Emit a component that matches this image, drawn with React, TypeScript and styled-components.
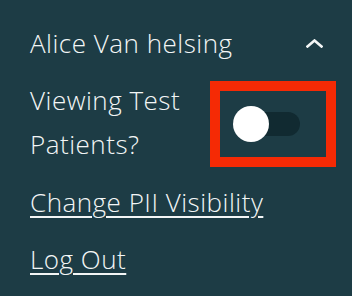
import styled, { createGlobalStyle } from 'styled-components'

const GlobalStyle = createGlobalStyle`
	html, body {
		margin: 0;
		padding: 0;
		background: #1d3c45;
	}
	body {
		font-family: "Open Sans", Lato, sans-serif;
	}
`

const Panel = styled.nav`
	width: 352px;
	height: 296px;
	box-sizing: border-box;
	padding: 21px 16px 0 30px;
	background: #1d3c45;
	color: #f3f6f6;
	display: flex;
	flex-direction: column;
	gap: 13px;
	font-size: 26px;
	font-weight: 300;
	letter-spacing: 0.5px;
	line-height: 44px;
`

const Header = styled.div`
	display: flex;
	align-items: center;
	justify-content: space-between;
	padding-right: 13px;
`

const Name = styled.span``

const Chevron = styled.svg`
	width: 17px;
	height: 9px;
	display: block;
`

const ToggleRow = styled.div`
	display: flex;
	align-items: flex-start;
	justify-content: space-between;
`

const Label = styled.span`
	width: 178px;
`

const Highlight = styled.div`
	margin-top: 3px;
	width: 126px;
	height: 86px;
	box-sizing: border-box;
	border: 10px solid #f52a05;
	display: flex;
	align-items: center;
	padding-left: 13px;
`

const Track = styled.button`
	position: relative;
	width: 67px;
	height: 24px;
	border: 0;
	padding: 0;
	border-radius: 12px;
	background: #112a31;
	cursor: pointer;
`

const Knob = styled.span`
	position: absolute;
	left: 0;
	top: -6px;
	width: 36px;
	height: 36px;
	border-radius: 50%;
	background: #ffffff;
`

const MenuLink = styled.a`
	color: inherit;
	text-decoration: underline;
	text-decoration-thickness: 2px;
	text-underline-offset: 4px;
	align-self: flex-start;
`

export default function App() {
	return (
		<>
			<GlobalStyle />
			<Panel>
				<Header>
					<Name>Alice Van helsing</Name>
					<Chevron viewBox="0 0 17 9" fill="none">
						<path d="M1.5 7.5 L8.5 1.5 L15.5 7.5" stroke="#f3f6f6" strokeWidth="2.6" strokeLinecap="square" />
					</Chevron>
				</Header>
				<ToggleRow>
					<Label>Viewing Test Patients?</Label>
					<Highlight>
						<Track aria-label="Viewing Test Patients" aria-pressed="false">
							<Knob />
						</Track>
					</Highlight>
				</ToggleRow>
				<MenuLink href="#">Change PII Visibility</MenuLink>
				<MenuLink href="#">Log Out</MenuLink>
			</Panel>
		</>
	)
}
